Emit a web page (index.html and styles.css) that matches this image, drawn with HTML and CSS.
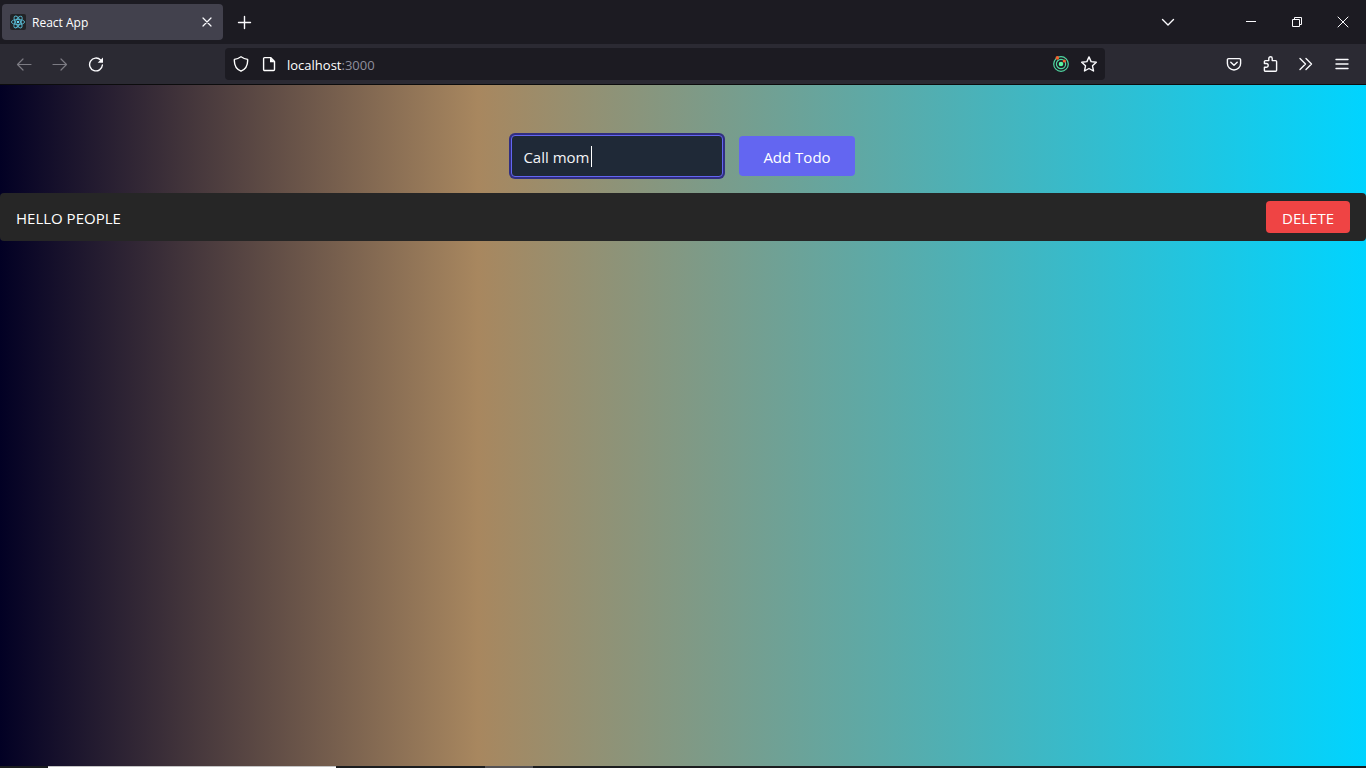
FILE: index.html
```
<!DOCTYPE html>
<html lang="en">
<head>
<meta charset="utf-8">
<meta name="viewport" content="width=device-width, initial-scale=1">
<title>React App</title>
<link rel="stylesheet" href="styles.css">
</head>
<body>
<div class="window">
  <header class="tab-bar">
    <div class="tab">
      <svg class="favicon" viewBox="0 0 16 16" aria-hidden="true">
        <rect width="16" height="16" rx="2" fill="#222326"/>
        <g fill="none" stroke="#58b9d1" stroke-width=".9">
          <ellipse cx="8" cy="8" rx="6.6" ry="2.6"/>
          <ellipse cx="8" cy="8" rx="6.6" ry="2.6" transform="rotate(60 8 8)"/>
          <ellipse cx="8" cy="8" rx="6.6" ry="2.6" transform="rotate(120 8 8)"/>
        </g>
        <circle cx="8" cy="8" r="1.3" fill="#61dafb"/>
      </svg>
      <span class="tab-title">React App</span>
      <button class="icon-button tab-close" aria-label="Close tab">
        <svg class="icon" viewBox="0 0 16 16"><path d="M4 4l8 8M12 4l-8 8"/></svg>
      </button>
    </div>
    <button class="icon-button new-tab" aria-label="New tab">
      <svg class="icon bold" viewBox="0 0 16 16"><path d="M8.500 2.500v12M2.500 8.500h12"/></svg>
    </button>
    <button class="icon-button list-tabs" aria-label="List all tabs">
      <svg class="icon bold" viewBox="0 0 16 16"><path d="M2.500 5.500L8 11l5.500-5.500"/></svg>
    </button>
    <div class="window-controls">
      <button class="icon-button" aria-label="Minimize">
        <svg class="icon crisp" viewBox="0 0 16 16"><path d="M3 7.500h10"/></svg>
      </button>
      <button class="icon-button" aria-label="Restore">
        <svg class="icon crisp" viewBox="0 0 16 16"><path d="M3.500 5.500h7v7h-7zM5.500 5.500v-2h7v7h-2"/></svg>
      </button>
      <button class="icon-button" aria-label="Close">
        <svg class="icon thin" viewBox="0 0 16 16"><path d="M3 3l10 10M13 3L3 13"/></svg>
      </button>
    </div>
  </header>

  <nav class="nav-bar" aria-label="Browser">
    <div class="nav-buttons">
      <button class="icon-button dim" aria-label="Back">
        <svg class="icon" viewBox="0 0 16 16"><path d="M15 8.500H1.500M7 3L1.500 8.500 7 14"/></svg>
      </button>
      <button class="icon-button dim" aria-label="Forward">
        <svg class="icon" viewBox="0 0 16 16"><path d="M1 8.500h13.500M9 3l5.500 5.500L9 14"/></svg>
      </button>
      <button class="icon-button" aria-label="Reload">
        <svg class="icon bold" viewBox="0 0 16 16"><path d="M12.600 4A6.400 6.400 0 1 0 14.400 9"/><path class="solid" d="M15 1.500v5.300H9.700z"/></svg>
      </button>
    </div>
    <div class="address-bar">
      <div class="address-icons">
        <svg class="icon bold" viewBox="0 0 16 16" aria-hidden="true"><path d="M8 .8c2 1.400 4.200 2.300 6.600 2.600.4 5.500-2 9.800-6.600 11.800C3.400 13.200 1 8.900 1.400 3.400 3.800 3.100 6 2.200 8 .8z"/></svg>
        <svg class="icon bold" viewBox="0 0 16 16" aria-hidden="true"><path d="M3.600 1.600h6l3.900 4v7.900a1 1 0 0 1-1 1H3.600a1 1 0 0 1-1-1V2.600a1 1 0 0 1 1-1z"/><path class="solid" d="M9 1.500v4.700h4.700z"/></svg>
      </div>
      <span class="url">localhost<span class="port">:3000</span></span>
      <div class="address-icons">
        <svg class="radar" viewBox="0 0 16 16" aria-hidden="true">
          <g fill="none" stroke="#4fd6a0" stroke-width="1.200">
            <circle cx="8" cy="8" r="7.300"/><circle cx="8" cy="8" r="4.600"/>
          </g>
          <circle cx="8" cy="8" r="2.300" fill="#5af7a2"/>
          <circle cx="4.300" cy="1.900" r="1.800" fill="#f26430"/><circle cx="11.300" cy="5" r="1.600" fill="#f26430"/>
        </svg>
        <button class="icon-button" aria-label="Bookmark this page">
          <svg class="icon bold" viewBox="0 0 16 16"><path d="M8 .9l2.100 4.700 5.200.6-3.800 3.600 1 5.200L8 12.500 3.500 15l1-5.200L.7 6.200l5.200-.6z"/></svg>
        </button>
      </div>
    </div>
    <div class="toolbar">
      <button class="icon-button" aria-label="Save to Pocket">
        <svg class="icon bold" viewBox="0 0 16 16"><path d="M2.600 2.600h10.800a1.200 1.200 0 0 1 1.200 1.200v3.600a6.600 6.600 0 0 1-13.200 0V3.800a1.200 1.200 0 0 1 1.200-1.200zM4.800 6.200L8 9.300l3.200-3.100"/></svg>
      </button>
      <button class="icon-button" aria-label="Extensions">
        <svg class="icon bold" viewBox="0 0 16 16"><path d="M2.400 7.500V5.600a1 1 0 0 1 1-1h3.400V2.500a1.700 1.700 0 0 1 3.400 0v2.100h3.400a1 1 0 0 1 1 1v8.600a1 1 0 0 1-1 1H3.400a1 1 0 0 1-1-1v-2.900h1.900a1.800 1.800 0 0 0 0-3.800z"/></svg>
      </button>
      <button class="icon-button" aria-label="More tools">
        <svg class="icon bold" viewBox="0 0 16 16"><path d="M2 2.500L7.500 8 2 13.500M8 2.500L13.500 8 8 13.500"/></svg>
      </button>
      <button class="icon-button" aria-label="Menu">
        <svg class="icon bold" viewBox="0 0 16 16"><path d="M2 3.500h12M2 8h12M2 12.500h12"/></svg>
      </button>
    </div>
  </nav>

  <main class="page">
    <form class="todo-form">
      <div class="field">
        <input class="todo-input" type="text" value="Call mom" aria-label="New todo">
        <span class="caret" aria-hidden="true"></span>
      </div>
      <button class="add-button" type="button">Add Todo</button>
    </form>
    <ul class="todo-list">
      <li class="todo-item">
        <span class="todo-text">HELLO PEOPLE</span>
        <button class="delete-button" type="button">DELETE</button>
      </li>
    </ul>
  </main>

  <footer class="taskbar">
    <div class="task-search"></div>
    <div class="task-active"></div>
  </footer>
</div>
</body>
</html>
```
FILE: styles.css
```
* {
  box-sizing: border-box;
}

body {
  margin: 0;
  font-family: "Segoe UI", "Open Sans", sans-serif;
  font-size: 15px;
  line-height: 24px;
  color: #fff;
}

button,
input {
  font: inherit;
  color: inherit;
}

.window {
  display: flex;
  flex-direction: column;
  min-height: 100vh;
}

.icon-button {
  display: flex;
  align-items: center;
  justify-content: center;
  padding: 0;
  border: 0;
  background: none;
  color: #fbfbfe;
}

.icon {
  flex: none;
  width: 16px;
  height: 16px;
  fill: none;
  stroke: currentColor;
  stroke-width: 1.2;
  stroke-linecap: round;
  stroke-linejoin: round;
}

.icon.bold {
  stroke-width: 1.4;
}

.icon.thin {
  stroke-width: 1;
}

.icon.crisp {
  stroke-width: 1;
  stroke-linecap: butt;
  stroke-linejoin: miter;
}

.icon .solid {
  fill: currentColor;
  stroke: none;
}

.tab-bar {
  display: flex;
  align-items: center;
  height: 44px;
  padding-left: 2px;
  background: #1c1b22;
}

.tab {
  display: flex;
  align-items: center;
  gap: 6px;
  width: 221px;
  height: 36px;
  padding: 0 8px;
  border-radius: 4px;
  background: #42414d;
  font-size: 12px;
}

.tab-title,
.url,
.todo-text {
  padding-top: 2px;
}

.favicon {
  width: 16px;
  height: 16px;
}

.tab-close {
  margin-left: auto;
}

.new-tab {
  margin-left: 13px;
}

.list-tabs {
  margin-left: auto;
}

.window-controls {
  display: flex;
  margin-left: 52px;
}

.window-controls .icon-button {
  width: 46px;
  height: 44px;
}

.nav-bar {
  display: flex;
  align-items: center;
  height: 41px;
  padding: 0 16px;
  border-bottom: 1px solid #0c0c0d;
  background: #2b2a33;
}

.nav-buttons,
.toolbar {
  display: flex;
  gap: 20px;
}

.dim {
  color: #7c7b83;
}

.address-bar {
  display: flex;
  flex: 1;
  align-items: center;
  gap: 10px;
  height: 32px;
  margin: 0 121px;
  padding: 0 8px;
  border-radius: 4px;
  background: #1c1b22;
  font-size: 13px;
}

.address-icons {
  display: flex;
  gap: 12px;
}

.url {
  flex: 1;
}

.port {
  color: #8f8f9d;
}

.radar {
  width: 16px;
  height: 16px;
}

.page {
  flex: 1;
  padding-top: 48px;
  background: linear-gradient(90deg, #020024 0%, #a8875f 35%, #00d4ff 100%);
}

.todo-form {
  display: flex;
  align-items: center;
  justify-content: center;
  gap: 16px;
  padding-bottom: 14px;
}

.field {
  position: relative;
}

.todo-input {
  display: block;
  width: 212px;
  height: 42px;
  margin: 2px 0;
  padding: 2px 11px 0;
  border: 1px solid #6366f1;
  border-radius: 4px;
  outline: 0;
  background: #1f2937;
  box-shadow: 0 0 0 2px #312e81;
  color: #f3f4f6;
}

.caret {
  position: absolute;
  top: 13px;
  left: 80px;
  width: 1px;
  height: 21px;
  background: #fff;
}

.add-button {
  height: 40px;
  padding: 2px 24px 0;
  border: 0;
  border-radius: 4px;
  background: #6366f1;
}

.todo-list {
  margin: 0;
  padding: 0;
  list-style: none;
}

.todo-item {
  display: flex;
  align-items: center;
  justify-content: space-between;
  padding: 8px 16px;
  border-radius: 4px;
  background: #262626;
}

.delete-button {
  padding: 5px 16px 3px;
  border: 0;
  border-radius: 4px;
  background: #ef4444;
}

.taskbar {
  display: flex;
  gap: 149px;
  height: 2px;
  padding-left: 48px;
  background: #1b1d1f;
}

.task-search {
  width: 288px;
  border-top: 1px solid #c4c4c4;
  background: #fff;
}

.task-active {
  width: 48px;
  background: #545254;
}
```
